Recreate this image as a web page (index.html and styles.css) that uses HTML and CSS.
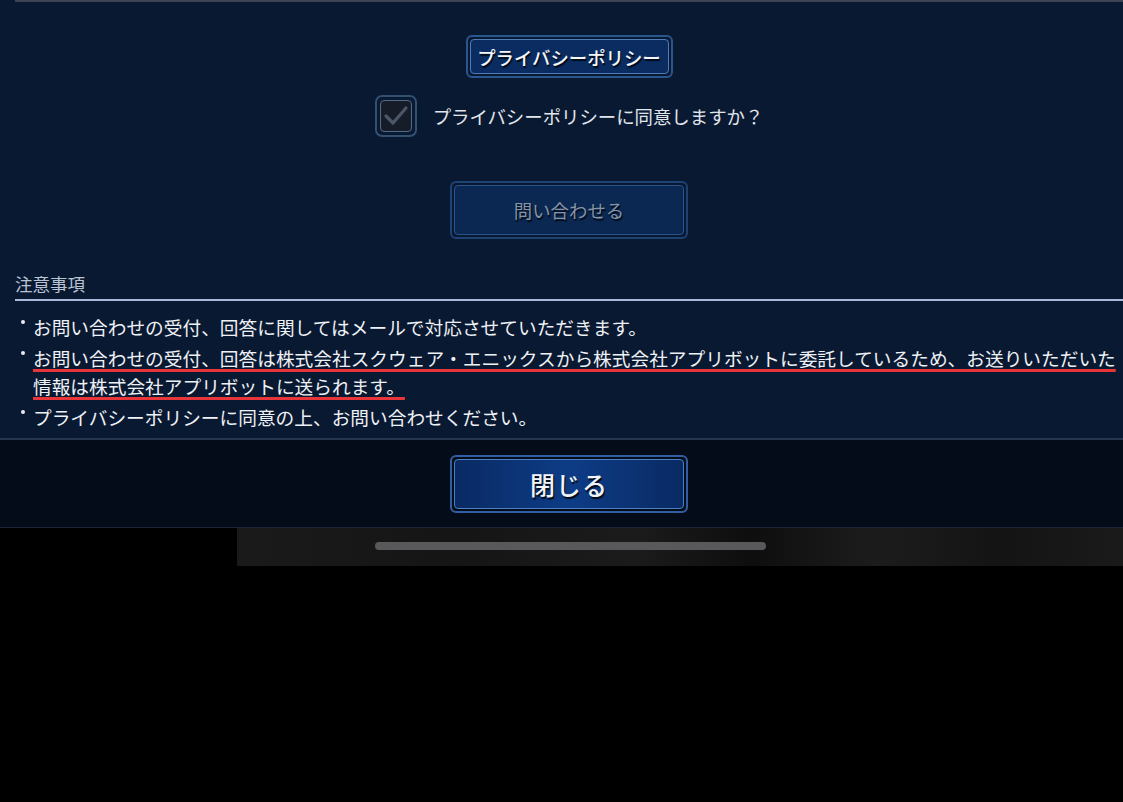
FILE: index.html
```html
<!DOCTYPE html>
<html lang="ja">
<head>
<meta charset="utf-8">
<link rel="stylesheet" href="styles.css">
</head>
<body>
<div class="screen">
  <div class="panel">
    <div class="topline"></div>
    <div class="center-col">
      <div class="btn btn-policy"><span class="btn-in">プライバシーポリシー</span></div>
      <div class="agree-row">
        <div class="checkbox">
          <div class="checkbox-in">
            <svg viewBox="0 0 30 30" width="30" height="30"><path d="M5 15 L12 22 L25 7" fill="none" stroke="#4b5767" stroke-width="3.2" stroke-linecap="round" stroke-linejoin="round"/></svg>
          </div>
        </div>
        <span class="agree-text">プライバシーポリシーに同意しますか？</span>
      </div>
      <div class="btn btn-send"><span class="btn-in">問い合わせる</span></div>
    </div>
    <div class="notes">
      <div class="notes-title">注意事項</div>
      <ul class="notes-list">
        <li>お問い合わせの受付、回答に関してはメールで対応させていただきます。</li>
        <li><span class="mark">お問い合わせの受付、回答は株式会社スクウェア・エニックスから株式会社アプリボットに委託しているため、お送りいただいた情報は株式会社アプリボットに送られます。</span></li>
        <li>プライバシーポリシーに同意の上、お問い合わせください。</li>
      </ul>
    </div>
  </div>
  <div class="footer">
    <div class="btn btn-close"><span class="btn-in">閉じる</span></div>
  </div>
  <div class="strip">
    <div class="strip-img"><div class="home-bar"></div></div>
  </div>
</div>
</body>
</html>
```
FILE: styles.css
```css
html, body {
  margin: 0;
  padding: 0;
  background: #000;
}
body {
  width: 1123px;
  height: 802px;
  overflow: hidden;
  font-family: "Noto Sans CJK JP", "Noto Sans", sans-serif;
  color: #e6eaf0;
}
.screen {
  display: flex;
  flex-direction: column;
}
.panel {
  height: 438px;
  background: #0a1932;
  border-bottom: 2px solid #26354e;
  padding-left: 15px;
  display: flex;
  flex-direction: column;
}
.topline {
  height: 2px;
  background: #3d4354;
  margin-bottom: 33px;
}
.center-col {
  display: flex;
  flex-direction: column;
  align-items: center;
}
.btn {
  box-sizing: border-box;
  border: 2px solid #2a568f;
  border-radius: 6px;
  padding: 2px;
  display: flex;
}
.btn-in {
  flex: 1;
  display: flex;
  align-items: center;
  justify-content: center;
  border: 1px solid #4c7bb8;
  border-radius: 4px;
  background: #0b2c60;
  font-size: 18.4px;
  color: #f4f6fa;
  text-shadow: 1px 2px 1px #000a18;
}
.btn-policy {
  width: 207px;
  height: 43px;
}
.btn-policy .btn-in {
  font-weight: 500;
}
.agree-row {
  display: flex;
  align-items: center;
  margin-top: 17px;
  gap: 16px;
  height: 42px;
}
.checkbox {
  box-sizing: border-box;
  width: 42px;
  height: 42px;
  border: 2px solid #33506f;
  border-radius: 7px;
  padding: 3px;
  display: flex;
}
.checkbox-in {
  flex: 1;
  border: 1.5px solid #4f6a88;
  border-radius: 4px;
  background: #161d29;
  display: flex;
  align-items: center;
  justify-content: center;
}
.agree-text {
  font-size: 18.4px;
  color: #e2e6ec;
}
.btn-send {
  margin-top: 44px;
  width: 238px;
  height: 58px;
  border-color: #1d4274;
}
.btn-send .btn-in {
  border-color: #2b548c;
  background: #0a2851;
  color: #8693a6;
}
.notes {
  margin-top: 31px;
}
.notes-title {
  font-size: 17.5px;
  color: #b9c3d4;
  line-height: 28px;
  padding-bottom: 1px;
  border-bottom: 2px solid #a8b8d6;
}
.notes-list {
  list-style: none;
  margin: 12px 0 0 0;
  padding: 0 0 0 18px;
  font-size: 18.7px;
  line-height: 28px;
  color: #eef1f5;
}
.notes-list li {
  position: relative;
  margin-bottom: 3px;
}
.notes-list li::before {
  content: "";
  position: absolute;
  left: -12px;
  top: 7px;
  width: 4px;
  height: 4px;
  border-radius: 50%;
  background: #e8ecf2;
}
.mark {
  text-decoration: underline;
  text-decoration-color: #e8353a;
  text-decoration-thickness: 3px;
  text-underline-offset: 3px;
  text-decoration-skip-ink: none;
}
.footer {
  height: 87px;
  background: #040c1a;
  border-bottom: 1px solid #1a2638;
  display: flex;
  justify-content: center;
  align-items: flex-start;
  padding-left: 15px;
}
.btn-close {
  margin-top: 15px;
  width: 238px;
  height: 58px;
  border-color: #2f5fa2;
}
.btn-close .btn-in {
  border-color: #4c80c4;
  background: linear-gradient(90deg, #0a2a63 0%, #0d3c86 50%, #0a2a63 100%);
  font-size: 25px;
  font-weight: 500;
  letter-spacing: 1px;
  color: #f1f4f8;
}
.strip {
  height: 38px;
  display: flex;
}
.strip-img {
  margin-left: 237px;
  flex: 1;
  background: linear-gradient(90deg, #1a1a1b 0%, #151515 25%, #1b1b1b 45%, #0e0e0e 58%, #1c1c1c 72%, #141414 86%, #1a1a1a 100%);
  display: flex;
  align-items: center;
}
.home-bar {
  margin-left: 138px;
  margin-top: -2px;
  width: 391px;
  height: 8px;
  border-radius: 4px;
  background: #59595b;
}
```
